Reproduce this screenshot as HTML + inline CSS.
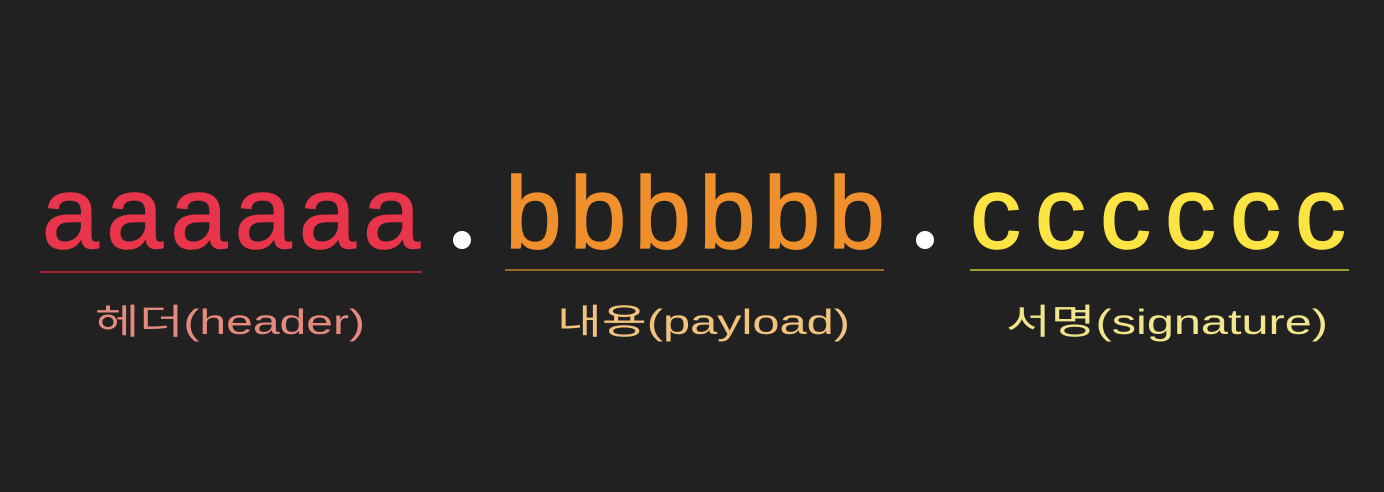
<!DOCTYPE html>
<html><head><meta charset="utf-8"><style>
html,body{margin:0;padding:0;background:#212121;}
svg{display:block}
</style></head><body>
<svg width="1384" height="492" viewBox="0 0 1384 492" xmlns="http://www.w3.org/2000/svg">
<rect width="1384" height="492" fill="#212121"/>
<g font-family="'Liberation Sans','DejaVu Sans',sans-serif" font-size="102" stroke-width="1.5">
<text x="42" y="248" fill="#e8354b" stroke="#e8354b" textLength="378" lengthAdjust="spacing">aaaaaa</text>
<text x="505" y="248" fill="#f0902c" stroke="#f0902c" textLength="380" lengthAdjust="spacing">bbbbbb</text>
<text x="970" y="248" fill="#fbe443" stroke="#fbe443" textLength="376" lengthAdjust="spacing">cccccc</text>
</g>
<circle cx="462" cy="240" r="9" fill="#fff"/>
<circle cx="925" cy="240" r="9" fill="#fff"/>
<rect x="40" y="271" width="382" height="2" fill="#a8283a"/>
<rect x="505" y="269" width="379" height="2" fill="#9a6a22"/>
<rect x="970" y="269" width="379" height="2" fill="#a59a30"/>
<g font-family="'Liberation Sans','Noto Sans CJK KR',sans-serif" font-size="35">
<text x="95" y="334" fill="#e58a7e" textLength="270" lengthAdjust="spacingAndGlyphs">헤더(header)</text>
<text x="557" y="334" fill="#f2c37e" textLength="293" lengthAdjust="spacingAndGlyphs">내용(payload)</text>
<text x="1006" y="334" fill="#f1e68c" textLength="322" lengthAdjust="spacingAndGlyphs">서명(signature)</text>
</g>
</svg>
</body></html>
